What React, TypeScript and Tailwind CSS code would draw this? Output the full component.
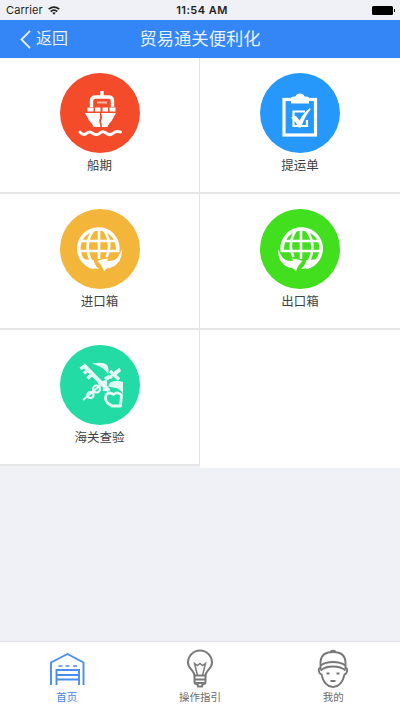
import React from 'react';

interface ServiceCellProps {
  label: string;
  color: string;
  side: 'left' | 'right';
  children: React.ReactNode;
}

const ServiceCell: React.FC<ServiceCellProps> = ({ label, color, side, children }) => {
  return (
    <div
      className={`flex h-[136px] flex-col items-center border-b-2 border-[#e6e6e8] bg-white pt-[15px] ${
        side === 'left' ? 'border-r border-r-[#e2e2e4]' : ''
      }`}
    >
      <div className={`h-20 w-20 shrink-0 rounded-full ${color}`}>
        <svg className="h-20 w-20" viewBox="0 0 80 80" fill="none" stroke="white">
          {children}
        </svg>
      </div>
      <div className="mt-1 text-[12.5px] leading-[18px] text-[#3c3f45]">{label}</div>
    </div>
  );
};

const ShipIcon = () => (
  <>
    <path d="M42 18v6M31.500 34v-6q0-4 4-4h13q4 0 4 4v6" strokeWidth="3.400" />
    <path d="M37 29.500h10" strokeWidth="2" opacity=".6" />
    <path d="M27.500 36.500h6M35 36.500h5.500M42.500 36.500H48M49.500 36.500h6" strokeWidth="3.800" />
    <path d="M25 40h15v6l-1 1 1.500 7h-7q-1.500-4-4-6zM41.500 40H56l-4.500 8q-2.500 2-4 6h-5.500l-1-7 1-1z" fill="white" stroke="none" />
    <path
      d="M20 59c2 3 5 3 7 1 2-2 4-1 6 .5s5 1.500 7-.5 4-1.500 6 0 5 2.500 7.500 0 5-1.500 7-1"
      strokeWidth="3"
      strokeLinecap="round"
    />
  </>
);

const ClipboardIcon = () => (
  <>
    <rect x="24" y="26.500" width="31.500" height="35.500" strokeWidth="3.200" />
    <path d="M31 30.500v-5q0-2 3-2h1.500q1-3 4.500-3t4.500 3H46q3 0 3 2v5z" fill="white" stroke="none" />
    <path d="M45 38.500H33.500v14.500H47v-6" strokeWidth="2.200" />
    <path d="M31 44.500l5-1.500 3.500 4.500q4-7.500 10.500-12.500l.5 1.500q-5.500 6.500-9.500 18h-2.500q-2.500-6-7.500-10z" fill="white" stroke="none" />
  </>
);

const GlobeIcon: React.FC<{ flipped?: boolean }> = ({ flipped }) => (
  <g transform={flipped ? 'translate(80 0) scale(-1 1)' : undefined}>
    <path d="M34 58.500A19.500 19.500 0 1 1 57.500 43" strokeWidth="3.600" />
    <path d="M39 21v29M32 53C26 44 26 31 33 22M46.500 48c4-8 3-18-2-26.500M22 32h34M19 42h39" strokeWidth="2.600" />
    <path d="M20.500 48.500q4 2.500 13 2.500l1 3q1 3.500 4.500 6-11 .5-18.500-11.500z" fill="white" stroke="none" />
    {/* hand under the globe */}
    <path
      d="M61.500 40.500q1.500 10-7 16.500-4.500 2-8 2.500l-2.500 3q-1-5-6.500-10.500 4.500-2.500 11-2.500l-2 2q7 1.500 11-3 2.500-3.500 4-8z"
      fill="white"
      stroke="none"
    />
  </g>
);

const CustomsIcon = () => (
  <g opacity=".88">
    {/* key */}
    <path d="M23.500 20l25.500 26" strokeWidth="4" />
    <path d="M20.500 24l4-3M24 28.500l4-3.500M27.500 33.500l5-5" strokeWidth="3.400" />
    <path d="M53.500 49.500q-4-3-7 0-2.500 4 1 8.500l4.500 3h8.500l1-11q-4-4-8-.5z" strokeWidth="2.800" strokeLinejoin="round" />
    {/* caduceus */}
    <path d="M23 55L60 23.500" strokeWidth="2" />
    <circle cx="30.500" cy="50" r="3" strokeWidth="2.200" />
    <circle cx="36.500" cy="44" r="3.500" strokeWidth="2.200" />
    <path d="M38 38l9-1M44 46l2-8M45 34q4-4 7-1" strokeWidth="3" />
    <path d="M50 26l9 8.500M54 29.500l6-5" strokeWidth="3.600" />
    <path d="M32 18.500q11-2 15 1.500 2.500 3.500 1 9-4-7-16-10.500zM50 37.500q6-2.500 13-.5v12q-3-6-9.500-6.500l-5.500-1z" fill="white" stroke="none" />
  </g>
);

const WarehouseIcon = () => (
  <svg className="h-10 w-10" viewBox="0 0 40 40" fill="none" stroke="#4a8df2" strokeWidth="1.900">
    <path d="M4 36V13.500L20.500 5l16 8.500V36" />
    <path d="M9.500 36V21h22.500v15M9.500 26H32M9.500 30.500H32" />
    <path d="M11.500 17h4M18.500 17h4M26 17h4" strokeWidth="1.700" />
  </svg>
);

const BulbIcon = () => (
  <svg className="h-10 w-10" viewBox="0 0 40 40" fill="none" stroke="#7a7a7a" strokeWidth="2">
    <path d="M14.500 26.500c0-5-6.500-6.500-6.500-13a12 12 0 0 1 24 0c0 6.500-6.500 8-6.500 13z" />
    <path d="M17.500 26.500L14.500 14.500l3 2 2.500-2 2.500 2 3-2-3 12" strokeWidth="1.500" />
    <path d="M14.500 26.500v6.500q0 2 3 2.500l.5 2h4l.5-2q3-.5 3-2.500v-6.500M14.500 30.500h11M15.500 34h9" />
  </svg>
);

const WorkerIcon = () => (
  <svg className="h-10 w-10" viewBox="0 0 40 40" fill="none" stroke="#777" strokeWidth="1.900">
    <path d="M7.500 20.500V13Q8 3 20 3t12.500 10v7.500" />
    <path d="M7.500 16.500q5-3.500 12.500-3.500t12.500 3.500M17.500 2.500q2.500-1.500 5 0" />
    <path d="M7.500 21.500q4.500-4 12.500-4t12.500 4" />
    <path d="M7.500 19q-2.500.5-1.500 3.500.5 2.500 2.500 3Q11 37.500 20 38q9-.5 11.500-12.500 2-.5 2.500-3 1-3-1.500-3.500" />
    <path d="M13.500 24.500h3M23.500 24.500h3M17.500 32h5" strokeWidth="2" />
  </svg>
);

const App: React.FC = () => {
  return (
    <div className="flex h-[711px] w-[400px] flex-col overflow-hidden bg-[#eff1f6] font-['Liberation_Sans','Noto_Sans_CJK_SC',sans-serif]">
      {/* Status bar */}
      <div className="grid h-5 shrink-0 grid-cols-3 items-center bg-[#f0f1f6] pr-[5px] pl-1.5 font-['Inter',sans-serif] text-[11px] text-[#222]">
        <div className="flex items-center gap-[5px]">
          <span className="tracking-[0.1px]">Carrier</span>
          <svg className="h-[9px] w-3" viewBox="0 0 12 9" fill="none" stroke="#222" strokeWidth="1.700">
            <path d="M.7 3.200q5.300-4.200 10.600 0M2.700 5.500q3.300-2.600 6.600 0" />
            <path d="M4.200 6.800q1.800-1.300 3.600 0L6 8.800z" fill="#222" stroke="none" />
          </svg>
        </div>
        <div className="pl-[3px] text-center font-semibold tracking-[0.45px] whitespace-nowrap">11:54 AM</div>
        <div className="flex items-center justify-end gap-px">
          <div className="h-[9px] w-[21px] rounded-[1.5px] bg-black" />
          <div className="h-[3px] w-px bg-black" />
        </div>
      </div>

      {/* Nav bar */}
      <div className="grid h-[38px] shrink-0 grid-cols-[80px_1fr_80px] items-center bg-[#3485f5] text-[#e8f1ff]">
        <div className="flex items-center gap-[5px] pl-5">
          <svg className="h-[19px] w-[11px]" viewBox="0 0 11 19" fill="none" stroke="currentColor" strokeWidth="1.800">
            <path d="M10 .8L1.500 9.500l8.500 8.700" />
          </svg>
          <span className="text-base leading-6">返回</span>
        </div>
        <h1 className="text-center text-[17.3px] leading-6 font-normal">贸易通关便利化</h1>
      </div>

      {/* Services */}
      <div className="grid shrink-0 grid-cols-2">
        <ServiceCell label="船期" color="bg-[#f44b2b]" side="left">
          <ShipIcon />
        </ServiceCell>
        <ServiceCell label="提运单" color="bg-[#2698fb]" side="right">
          <ClipboardIcon />
        </ServiceCell>
        <ServiceCell label="进口箱" color="bg-[#f3b63a]" side="left">
          <GlobeIcon />
        </ServiceCell>
        <ServiceCell label="出口箱" color="bg-[#41df1d]" side="right">
          <GlobeIcon flipped />
        </ServiceCell>
        <ServiceCell label="海关查验" color="bg-[#22dba5]" side="left">
          <CustomsIcon />
        </ServiceCell>
        <div className="-mb-0.5 bg-white" />
      </div>

      {/* Tab bar */}
      <div className="mt-auto grid h-[70px] shrink-0 grid-cols-3 border-t border-[#e2e3e8] bg-white text-[10.5px] leading-4 text-[#6b6b6b]">
        <div className="flex flex-col items-center pt-[7px] text-[#4285ee]">
          <WarehouseIcon />
          <span>首页</span>
        </div>
        <div className="flex flex-col items-center pt-[7px]">
          <BulbIcon />
          <span>操作指引</span>
        </div>
        <div className="flex flex-col items-center pt-[7px]">
          <WorkerIcon />
          <span>我的</span>
        </div>
      </div>
    </div>
  );
};

export default App;
